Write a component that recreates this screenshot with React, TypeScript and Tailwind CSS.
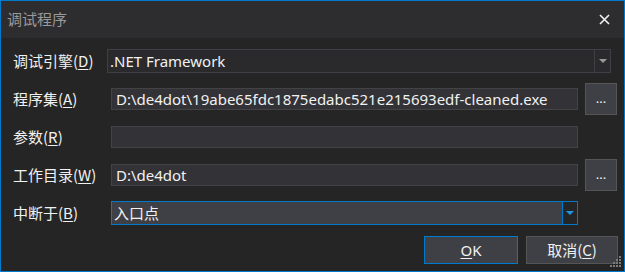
import React from "react";

const cjk = "font-['Microsoft_YaHei','Noto_Sans_CJK_SC',sans-serif]";
const latin = "font-['Segoe_UI','Noto_Sans','Noto_Sans_CJK_SC',sans-serif]";

const Label = ({ text, hot, width = "w-[98px]" }: { text: string; hot: string; width?: string }) => (
  <div className={`${width} shrink-0 text-[15px] text-[#f1f1f1] ${cjk}`}>
    {text}(<span className="underline underline-offset-2">{hot}</span>)
  </div>
);

const Browse = () => (
  <button className="ml-[7px] w-[32px] h-[32px] bg-[#3f3f46] border border-[#555555] text-[#f1f1f1] text-[13px] leading-none flex items-center justify-center pb-[2px]">
    ...
  </button>
);

const Grip = () => (
  <svg width="14" height="14" viewBox="0 0 14 14" className="absolute right-[1px] bottom-[2px]">
    {[0, 1, 2, 3].map((r) =>
      [0, 1, 2, 3].filter((c) => c >= 3 - r).map((c) => (
        <rect key={`${r}-${c}`} x={1 + c * 3} y={1 + r * 3} width="2" height="2" fill="#7a7a7a" />
      ))
    )}
  </svg>
);

export default function App() {
  return (
    <div className="w-[625px] h-[272px] border border-[#007acc] bg-[#252526] flex flex-col relative overflow-hidden">
      <div className="h-[37px] bg-[#2d2d30] flex items-center justify-between pl-[6px] pr-[14px] shrink-0">
        <span className={`text-[15px] text-[#999999] ${cjk}`}>调试程序</span>
        <svg width="11" height="11" viewBox="0 0 11 11">
          <path d="M1 1 L10 10 M10 1 L1 10" stroke="#f1f1f1" strokeWidth="1.6" />
        </svg>
      </div>

      <div className="flex-1 pl-[12px] pr-[6px] pt-[4px]">
        <div className="h-[38px] flex items-center">
          <Label text="调试引擎" hot="D" width="w-[94px]" />
          <div className="w-[504px] h-[24px] border border-[#3f3f46] bg-[#2a2a2c] flex">
            <div className={`flex-1 pl-[2px] text-[15px] text-[#f1f1f1] leading-[22px] ${latin}`}>.NET Framework</div>
            <div className="w-[16px] border-l border-[#3f3f46] flex items-center justify-center">
              <svg width="8" height="4" viewBox="0 0 8 4">
                <path d="M0 0 H8 L4 4 Z" fill="#999999" />
              </svg>
            </div>
          </div>
        </div>

        <div className="h-[38px] flex items-center">
          <Label text="程序集" hot="A" />
          <div className={`w-[467px] h-[22px] border border-[#434346] bg-[#333337] pl-[4px] text-[15px] text-[#f1f1f1] leading-[20px] whitespace-nowrap overflow-hidden ${latin}`}>
            D:\de4dot\19abe65fdc1875edabc521e215693edf-cleaned.exe
          </div>
          <Browse />
        </div>

        <div className="h-[38px] flex items-center">
          <Label text="参数" hot="R" />
          <div className="w-[467px] h-[22px] border border-[#434346] bg-[#333337]" />
        </div>

        <div className="h-[38px] flex items-center">
          <Label text="工作目录" hot="W" />
          <div className={`w-[467px] h-[22px] border border-[#434346] bg-[#333337] pl-[4px] text-[15px] text-[#f1f1f1] leading-[20px] ${latin}`}>
            D:\de4dot
          </div>
          <Browse />
        </div>

        <div className="h-[38px] flex items-center">
          <Label text="中断于" hot="B" />
          <div className="w-[467px] h-[24px] border border-[#007acc] bg-[#3f3f46] flex">
            <div className={`flex-1 pl-[2px] text-[15px] text-[#f1f1f1] leading-[22px] ${cjk}`}>入口点</div>
            <div className="w-[15px] border-l border-[#007acc] bg-[#252526] flex items-center justify-center">
              <svg width="8" height="4" viewBox="0 0 8 4">
                <path d="M0 0 H8 L4 4 Z" fill="#1c97ea" />
              </svg>
            </div>
          </div>
        </div>

        <div className="mt-[4px] flex justify-end gap-[8px]">
          <button className={`w-[94px] h-[28px] bg-[#3f3f46] border border-[#007acc] text-[15px] text-[#f1f1f1] ${latin}`}>
            <span className="underline underline-offset-2">O</span>K
          </button>
          <button className={`w-[92px] h-[28px] bg-[#3f3f46] border border-[#555555] text-[15px] text-[#f1f1f1] ${cjk}`}>
            取消(<span className="underline underline-offset-2">C</span>)
          </button>
        </div>
      </div>
      <Grip />
    </div>
  );
}
